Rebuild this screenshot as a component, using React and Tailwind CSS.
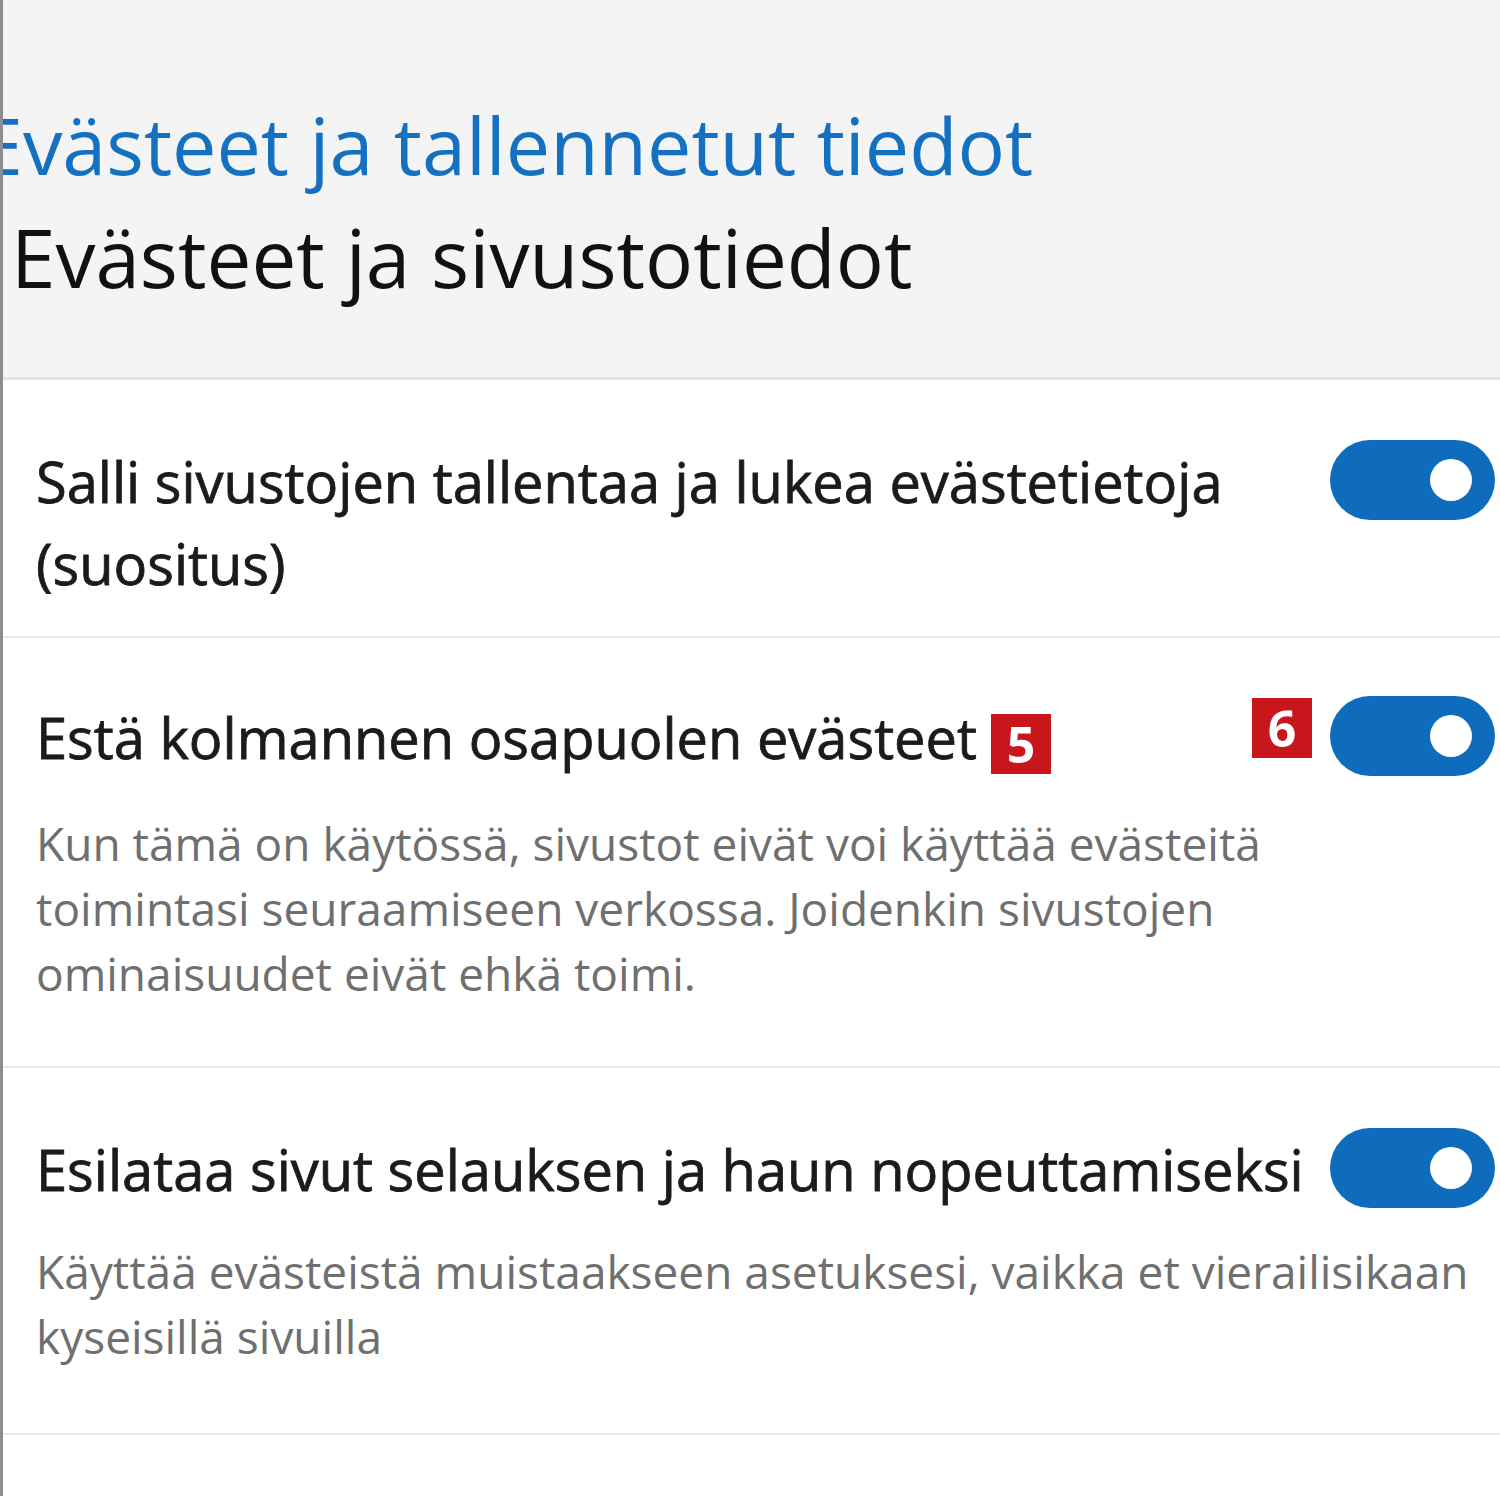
const font = { fontFamily: '"Open Sans", "Noto Sans", sans-serif' };

function Toggle() {
  return (
    <div className="w-[165px] h-[80px] rounded-full bg-[#0f6cbd] flex items-center justify-end pr-[23px] shrink-0">
      <div className="w-[42px] h-[42px] rounded-full bg-white" />
    </div>
  );
}

function Badge({ n }) {
  return (
    <span className="inline-flex items-center justify-center w-[60px] h-[60px] bg-[#c8161d] text-white font-bold text-[50px] leading-none">
      {n}
    </span>
  );
}

function SettingRow({ title, desc, badge, badge2, height, titlePad }) {
  return (
    <div className={`border-b-2 border-[#e8e8e8] pl-[33px] pr-[5px] ${height}`}>
      <div className={`flex justify-between items-start ${titlePad}`}>
        <div className="text-[56px] leading-[82px] text-[#1b1b1b] [-webkit-text-stroke:0.8px_#1b1b1b] max-w-[1285px]">
          {title}
          {badge && <span className="ml-[14px] align-[-4px] [-webkit-text-stroke:0]"><Badge n={badge} /></span>}
        </div>
        <div className="flex items-start gap-[18px]">
          {badge2 && <div className="mt-[2px]"><Badge n={badge2} /></div>}
          <Toggle />
        </div>
      </div>
      {desc && (
        <p className="text-[46px] leading-[65px] text-[#6f6f6f] pr-[10px] mt-[29px]">{desc}</p>
      )}
    </div>
  );
}

export default function App() {
  return (
    <div style={font} className="w-[1500px] h-[1496px] overflow-hidden bg-white border-l-[3px] border-[#8d8d8d]">
      <div className="bg-[#f3f4f3] h-[380px] border-b-[3px] border-[#e4e4e4] pt-[95px]">
        <h2 className="text-[79px] leading-[100px] text-[#1470c0] -ml-[24px] whitespace-nowrap">
          Evästeet ja tallennetut tiedot
        </h2>
        <h1 className="text-[80px] leading-[124px] text-[#111] ml-[8px] whitespace-nowrap">
          Evästeet ja sivustotiedot
        </h1>
      </div>
      <SettingRow
        title="Salli sivustojen tallentaa ja lukea evästetietoja (suositus)"
        height="h-[258px]"
        titlePad="pt-[60px]"
      />
      <SettingRow
        title="Estä kolmannen osapuolen evästeet"
        badge="5"
        badge2="6"
        desc="Kun tämä on käytössä, sivustot eivät voi käyttää evästeitä toimintasi seuraamiseen verkossa. Joidenkin sivustojen ominaisuudet eivät ehkä toimi."
        height="h-[430px]"
        titlePad="pt-[58px]"
      />
      <SettingRow
        title="Esilataa sivut selauksen ja haun nopeuttamiseksi"
        desc="Käyttää evästeistä muistaakseen asetuksesi, vaikka et vierailisikaan kyseisillä sivuilla"
        height="h-[367px]"
        titlePad="pt-[60px]"
      />
    </div>
  );
}
